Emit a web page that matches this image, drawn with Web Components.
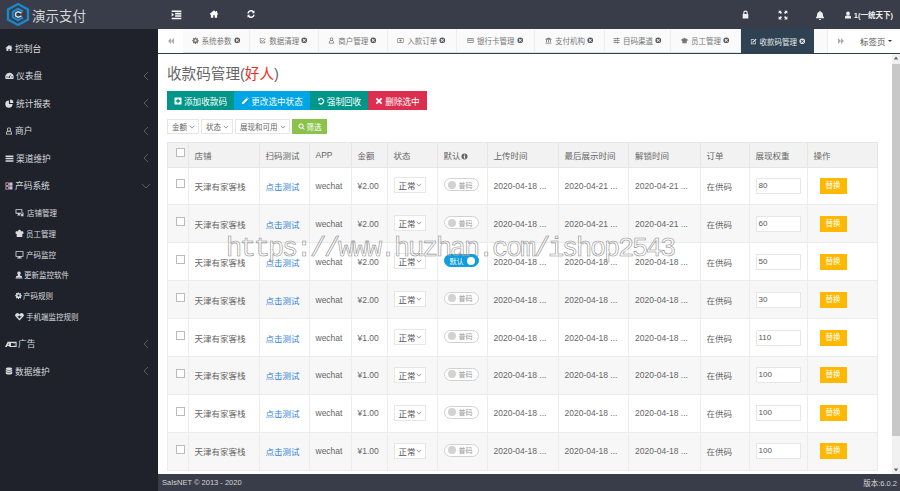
<!DOCTYPE html>
<html lang="zh">
<head>
<meta charset="utf-8">
<title>收款码管理</title>
<style>
  html, body { margin: 0; height: 100%; overflow: hidden; }
  body { font-family: "Liberation Sans", "Noto Sans CJK SC", sans-serif; color: #666; }
</style>
</head>
<body>
<pay-app>
  <top-bar slot="top"></top-bar>
  <side-menu slot="side"></side-menu>
  <tab-strip slot="tabs"></tab-strip>
  <code-page slot="main"></code-page>
  <page-footer slot="foot"></page-footer>
</pay-app>
<water-mark>https://www.huzhan.com/ishop2543</water-mark>

<script>
'use strict';

(function() {
  // 图标都画在 16x16 的格子里
  const ICONS = {
    indent: 'M1 2h14v2.4H1zM6 5.6h9V8H6zM6 9h9v2.400H6zM1 12.600h14V15H1zM1 5.500l3.500 2.700L1 11z',
    home: 'M8 2 1 8l1 1.200 1-.8V14h3.800v-4h2.400v4H13V8.400l1 .8L15 8l-2-1.700V3h-2v1.600z',
    refresh: 'M13.500 2.500v4.300H9.200l1.700-1.700A4 4 0 0 0 4.300 7H2a6.200 6.200 0 0 1 10.200-3.800zM2.500 13.500V9.200h4.300l-1.700 1.700A4 4 0 0 0 11.700 9H14a6.200 6.200 0 0 1-10.200 3.800z',
    lock: 'M4 7V5a4 4 0 0 1 8 0v2h1v8H3V7zm2 0h4V5a2 2 0 0 0-4 0z',
    expand: 'M1 1h5L4.500 2.500 6.500 4.500 4.500 6.500 2.500 4.500 1 6zM15 1v5l-1.500-1.500-2 2-2-2 2-2L10 1zM1 15v-5l1.500 1.500 2-2 2 2-2 2L6 15zM15 15h-5l1.500-1.500-2-2 2-2 2 2L15 10z',
    bell: 'M8 1a1 1 0 0 1 1 1v.6c2.500.5 3.700 2.500 3.700 5 0 2.400.8 3.400 1.800 4.400v1h-13v-1c1-1 1.800-2 1.800-4.400 0-2.500 1.200-4.500 3.700-5V2a1 1 0 0 1 1-1zM6.300 14.500h3.400a1.700 1.700 0 0 1-3.400 0z',
    user: 'M8 1a3.500 3.500 0 1 1 0 7.500A3.500 3.500 0 0 1 8 1zM2 15v-2.500C2 10.500 3.500 9 5 9h6c1.500 0 3 1.500 3 3.500V15z',
    userO: 'M8 1a4 4 0 0 1 2.700 7c1.900.6 3.300 2.300 3.300 4.300V15H2v-2.700C2 10.300 3.400 8.600 5.300 8A4 4 0 0 1 8 1zm0 1.600a2.400 2.400 0 1 0 0 4.800 2.400 2.400 0 0 0 0-4.800zM6.500 9.400c-1.700 0-3 1.200-3 2.900v1.100h9v-1.100c0-1.700-1.300-2.900-3-2.900z',
    gauge: 'M8 3a7.500 7.500 0 0 1 7.500 7.500c0 1.300-.3 2.400-.8 3.500H1.300A7.500 7.500 0 0 1 8 3zM3.500 9.500a1 1 0 1 0 0 2 1 1 0 0 0 0-2zm9 0a1 1 0 1 0 0 2 1 1 0 0 0 0-2zM10.800 5.500 7.400 9.800a1.300 1.300 0 1 0 1.400.6z',
    pie: 'M7 2.500V9h6.500A6.500 6.500 0 1 1 7 2.500zM9 1a6 6 0 0 1 6 6H9z',
    list: 'M1 2.500h14v2.700H1zM1 6.700h14v2.700H1zM1 10.900h14v2.700H1z',
    grid: 'M1 1h6.500v6.500H1zm1.500 1.500V6H6V2.500zM8.500 1H15v6.500H8.500zM1 8.500h6.500V15H1zm1.500 1.500v3.500H6V10zM8.500 8.500H15V15H8.500z',
    shop: 'M1 2h12v8H8.500v2H10v1.500H4V12h1.500v-2H1zm1.500 1.500v5h9v-5zM11 8h4v6.500h-4zm1.200 1.300v1.200h1.600V9.300z',
    team: 'M8 1.500a2.500 2.500 0 0 1 2.500 2.500h2a2 2 0 0 1 2.500 1.500v3l-2 .5v5H3V9L1 8.500v-3A2 2 0 0 1 3.500 4h2A2.500 2.500 0 0 1 8 1.500z',
    desktop: 'M1 2h14v10H9.500v1.500H12V15H4v-1.500h2.500V12H1zm1.500 1.500v7h11v-7z',
    upload: 'M8 1a3.500 3.500 0 0 1 2 6.400V9l4 1.500V13H2v-2.500L6 9V7.400A3.500 3.500 0 0 1 8 1zM1 13.500h14V15H1z',
    gear: 'M6.800 1h2.400l.3 1.900 1.300.6 1.600-1.100 1.700 1.700-1.100 1.600.6 1.300 1.900.3v2.400l-1.900.3-.6 1.300 1.100 1.600-1.700 1.700-1.600-1.100-1.300.6-.3 1.900H6.800l-.3-1.900-1.300-.6-1.600 1.100-1.700-1.700 1.100-1.600-.6-1.300L.5 9.200V6.800l1.900-.3.6-1.300-1.100-1.600 1.700-1.700 1.600 1.100 1.300-.6zM8 5.600a2.400 2.400 0 1 0 0 4.800 2.400 2.400 0 0 0 0-4.800z',
    heart: 'M8 15 1.500 8.500a4 4 0 0 1 0-5.500 4 4 0 0 1 5.500 0L8 4l1-1a4 4 0 0 1 5.500 0 4 4 0 0 1 0 5.500zM4 7.500l2.500.2L8 5.800l1.200 2 2.800-.2-4 3.900z',
    ad: 'M0 12 3.500 5h12v7H6l-.5-1.500H3L2.500 12zM3.600 9h1.500L4.700 7zM8 6.500v4h2.500a2 2 0 0 0 0-4zm4.500 0v4h1.500v-4z',
    database: 'M8 1c3.600 0 6.500 1 6.500 2.500S11.600 6 8 6 1.500 5 1.500 3.500 4.400 1 8 1zM1.500 5c1 1.300 3.500 2 6.500 2s5.500-.7 6.500-2v2.500C14.500 9 11.600 10 8 10S1.500 9 1.500 7.500zM1.500 9c1 1.300 3.500 2 6.500 2s5.500-.7 6.500-2v3.500C14.500 14 11.600 15 8 15s-6.500-1-6.500-2.500z',
    backward: 'M8 2v12L2 8zM14 2v12L8 8z',
    forward: 'M2 2v12l6-6zM8 2v12l6-6z',
    check: 'M2 2h10v1.500H3.500v9h9V9H14v5H2zM14.500 3l1 1L8 11.500 4.500 8l1-1L8 9.500z',
    card: 'M1 3h14v10H1zm1.300 1.300v2h11.400v-2zm0 4.200v3.200h11.400V8.500z',
    cash: 'M1 3h14v10H1zm1.300 1.300v7.400h11.400V4.300zM8 5.500a2.500 2.500 0 1 1 0 5 2.500 2.500 0 0 1 0-5z',
    bank: 'M8 1l7 3.500V6H1V4.500zM2.500 7h2v5h-2zM7 7h2v5H7zM11.500 7h2v5h-2zM1 13h14v2H1z',
    sliders: 'M1 3h8V1.500h2V3h4v1.500h-4V6H9V4.500H1zM1 7.500h3V6h2v1.500h9V9H6v1.500H4V9H1zM1 12h8v-1.500h2V12h4v1.500h-4V15H9v-1.500H1z',
    edit: 'M2 3h8L8.500 4.500h-5v8h8v-4L13 7v7H2zM13 1.500 15 3.500 8 10.500 5.500 11 6 8.500z',
    plusSquare: 'M2 1h12a1 1 0 0 1 1 1v12a1 1 0 0 1-1 1H2a1 1 0 0 1-1-1V2a1 1 0 0 1 1-1zm4.700 2.500v3.200H3.500v2.600h3.200v3.200h2.600V9.300h3.200V6.700H9.300V3.500z',
    pencil: 'M11 2 14 5 5.500 13.500 1.500 14.500 2.500 10.500zM12 1l1-.5 2.500 2.500L15 4z',
    undo: 'M2 2v5h5L5 5a4.200 4.200 0 1 1-.5 6l-1.700 1.400A6.400 6.400 0 1 0 3.700 3.600z',
    times: 'M4 1.500 8 5.500l4-4L14.500 4l-4 4 4 4-2.500 2.500-4-4-4 4L1.500 12l4-4-4-4z',
    search: 'M7 1a6 6 0 0 1 4.800 9.600L15.500 14 14 15.500l-3.400-3.700A6 6 0 1 1 7 1zm0 2.200a3.800 3.800 0 1 0 0 7.600 3.800 3.800 0 0 0 0-7.600z',
    close: 'M8 1a7 7 0 1 1 0 14A7 7 0 0 1 8 1zM5.500 4 4 5.500 6.500 8 4 10.500 5.500 12 8 9.500l2.500 2.500 1.500-1.500L9.500 8 12 5.500 10.500 4 8 6.500z',
    info: 'M8 1a7 7 0 1 1 0 14A7 7 0 0 1 8 1zM6.800 3.500v2.200h2.400V3.500zM6 7v1.300h.8v3H6v1.200h4v-1.200h-.8V7z'
  };

  class UiIcon extends HTMLElement {
    constructor() {
      super()
      const size = this.getAttribute('size') || 10
      const d = ICONS[this.getAttribute('name')] || ''
      this.attachShadow({ mode: 'open' }).innerHTML = `
        <style>
        :host { display: inline-flex; flex: none; }
        svg { display: block; width: ${size}px; height: ${size}px; fill: currentColor; }
        </style>
        <svg viewBox="0 0 16 16"><path fill-rule="evenodd" d="${d}"></path></svg>
      `
    }
  }
  customElements.define('ui-icon', UiIcon)

  class PayApp extends HTMLElement {
    constructor() {
      super()
      this.attachShadow({ mode: 'open' }).innerHTML = `
        <style>
        :host {
          display: grid;
          grid-template-columns: 158px 1fr;
          grid-template-rows: 29px 25px 1fr 17px;
          width: 900px;
          height: 491px;
          overflow: hidden;
          background: #fff;
        }
        ::slotted([slot=top]) { grid-column: 1 / 3; }
        ::slotted([slot=side]) { grid-row: 2 / 5; }
        </style>
        <slot name="top"></slot>
        <slot name="side"></slot>
        <slot name="tabs"></slot>
        <slot name="main"></slot>
        <slot name="foot"></slot>
      `
    }
  }
  customElements.define('pay-app', PayApp)

  class TopBar extends HTMLElement {
    constructor() {
      super()
      this.attachShadow({ mode: 'open' }).innerHTML = `
        <style>
        :host {
          display: flex;
          align-items: center;
          background: #393c49;
          color: #fff;
        }
        .logo { display: flex; align-items: center; gap: 2px; width: 158px; padding-left: 6px; box-sizing: border-box; }
        .logo span { font-size: 13.500px; color: #d6d6d6; }
        .left { display: flex; gap: 27px; padding-left: 13px; }
        .right { margin-left: auto; display: flex; align-items: center; padding-right: 7px; font-size: 7.500px; font-weight: bold; color: #eee; }
        .right ui-icon:nth-child(1) { margin-right: 28px; }
        .right ui-icon:nth-child(2) { margin-right: 27px; }
        .right ui-icon:nth-child(3) { margin-right: 19px; }
        .right ui-icon:nth-child(4) { margin-right: 2px; }
        </style>
        <div class="logo">
          <svg width="24" height="25" viewBox="0 0 24 25" fill="none">
            <path d="M12 2 22 7.500v10L12 23 2 17.500v-10z" stroke="#1d87c9" stroke-width="2.400"></path>
            <path d="M17 9.500 12 6.800 6.800 9.800v5.400l5.200 3 5-2.700" stroke="#1d87c9" stroke-width="2.200"></path>
            <path d="M15.500 11 12 9.700 9.600 11.200v2.600L12 15.300l3.500-1.300" stroke="#d8e6f0" stroke-width="1.400"></path>
          </svg>
          <span>演示支付</span>
        </div>
        <div class="left">
          <ui-icon name="indent" size="11"></ui-icon>
          <ui-icon name="home" size="10"></ui-icon>
          <ui-icon name="refresh" size="10"></ui-icon>
        </div>
        <div class="right">
          <ui-icon name="lock" size="9"></ui-icon>
          <ui-icon name="expand" size="10"></ui-icon>
          <ui-icon name="bell" size="10"></ui-icon>
          <ui-icon name="user" size="8"></ui-icon>
          <span>1(一统天下)</span>
        </div>
      `
    }
  }
  customElements.define('top-bar', TopBar)

  const MENU = [
    { icon: 'home', text: '控制台', size: 8 },
    { icon: 'gauge', text: '仪表盘', arrow: true },
    { icon: 'pie', text: '统计报表', arrow: true },
    { icon: 'userO', text: '商户', arrow: true, size: 8 },
    { icon: 'list', text: '渠道维护', arrow: true },
    { icon: 'grid', text: '产码系统', arrow: true, open: true, size: 8, tint: '#d9b8d0' },
    { sub: true, icon: 'shop', text: '店铺管理', gap: 3 },
    { sub: true, icon: 'team', text: '员工管理', gap: 2 },
    { sub: true, icon: 'desktop', text: '产码监控', gap: 2 },
    { sub: true, icon: 'upload', text: '更新监控软件', gap: 1, size: 8 },
    { sub: true, icon: 'gear', text: '产码规则', gap: 1, size: 7 },
    { sub: true, icon: 'heart', text: '手机端监控规则', gap: 2 },
    { icon: 'ad', text: '广告', arrow: true, size: 12, gap: 1 },
    { icon: 'database', text: '数据维护', arrow: true, size: 8 }
  ]

  class SideMenu extends HTMLElement {
    constructor() {
      super()
      const rows = MENU.map(item => `
        <div class="${item.sub ? 'sub' : 'item'}">
          <ui-icon name="${item.icon}" size="${item.size || 9}" style="color:${item.tint || 'inherit'}"></ui-icon>
          <span style="margin-left:${item.gap === undefined ? 2 : item.gap}px">${item.text}</span>
          ${item.arrow ? `<svg class="arrow" viewBox="0 0 10 10"><path d="${item.open ? 'M1 3l4 4 4-4' : 'M7 1 3 5l4 4'}"></path></svg>` : ''}
        </div>
      `).join('')
      this.attachShadow({ mode: 'open' }).innerHTML = `
        <style>
        :host {
          display: block;
          background: #1f222b;
          color: #d8dade;
          padding-top: 5.500px;
        }
        .item {
          display: flex;
          align-items: center;
          height: 27.500px;
          padding-left: 5px;
          font-size: 8.700px;
          position: relative;
        }
        .sub {
          display: flex;
          align-items: center;
          height: 20.700px;
          padding-left: 15px;
          font-size: 7.500px;
        }
        /* 展开的子菜单上下各留一点空 */
        .item + .sub { margin-top: 3px; }
        .sub + .item { margin-top: 3.500px; }
        .arrow {
          position: absolute;
          right: 7px;
          width: 10px;
          height: 10px;
          fill: none;
          stroke: #5a5d66;
          stroke-width: 1;
        }
        </style>
        ${rows}
      `
    }
  }
  customElements.define('side-menu', SideMenu)

  const TABS = [
    { icon: 'gear', text: '系统参数', width: 66.500 },
    { icon: 'check', text: '数据清理', width: 69 },
    { icon: 'userO', text: '商户管理', width: 69 },
    { icon: 'cash', text: '入款订单', width: 69 },
    { icon: 'card', text: '银行卡管理', width: 78 },
    { icon: 'bank', text: '支付机构', width: 70.500 },
    { icon: 'sliders', text: '目码渠道', width: 65.500 },
    { icon: 'team', text: '员工管理', width: 70.500 },
    { icon: 'edit', text: '收款码管理', width: 73, active: true }
  ]

  class TabStrip extends HTMLElement {
    constructor() {
      super()
      const tabs = TABS.map(tab => `
        <div class="tab${tab.active ? ' active' : ''}" style="width:${tab.width}px">
          <ui-icon name="${tab.icon}" size="7"></ui-icon>
          <span>${tab.text}</span>
          <ui-icon name="close" size="6.500"></ui-icon>
        </div>
      `).join('')
      this.attachShadow({ mode: 'open' }).innerHTML = `
        <style>
        :host {
          display: flex;
          align-items: stretch;
          box-sizing: border-box;
          height: 25px;
          background: #fafafa;
          border-bottom: 1px solid #2f4050;
          color: #777;
          font-size: 7.500px;
        }
        .nav { display: flex; align-items: center; justify-content: center; width: 25px; background: #fff; color: #aaa; flex: none; }
        .tab {
          display: flex;
          align-items: center;
          justify-content: center;
          gap: 3px;
          box-sizing: border-box;
          border-right: 1px solid #eeeeee;
          flex: none;
          border-bottom: 1px solid #dfdfdf;
        }
        .tab ui-icon:last-child { color: #555; margin-left: -1px; }
        .tab.active { background: #2e4254; color: #e8e8e8; border: 0; }
        .tab.active ui-icon:last-child { color: #e8e8e8; }
        .gap { width: 13px; background: #fafafa; flex: none; }
        .next { width: 26px; border-left: 1px solid #eee; }
        .menu { display: flex; align-items: center; gap: 2px; padding-left: 6px; background: #fff; flex: 1; color: #555; font-size: 8.500px; }
        .menu i { border: 2.500px solid transparent; border-top-color: #333; border-bottom: 0; }
        </style>
        <div class="nav"><ui-icon name="backward" size="8"></ui-icon></div>
        ${tabs}
        <div class="gap"></div>
        <div class="nav next"><ui-icon name="forward" size="8"></ui-icon></div>
        <div class="menu"><span>标签页</span><i></i></div>
      `
    }
  }
  customElements.define('tab-strip', TabStrip)

  class ActionBtn extends HTMLElement {
    constructor() {
      super()
      this.attachShadow({ mode: 'open' }).innerHTML = `
        <style>
        :host {
          display: inline-flex;
          align-items: center;
          justify-content: center;
          gap: 2px;
          height: 19px;
          color: #fff;
          font-size: 8.600px;
          background: var(--btn, #009688);
        }
        </style>
        <ui-icon name="${this.getAttribute('icon')}" size="8"></ui-icon>
        <slot></slot>
      `
    }
  }
  customElements.define('action-btn', ActionBtn)

  class FilterSelect extends HTMLElement {
    constructor() {
      super()
      this.attachShadow({ mode: 'open' }).innerHTML = `
        <style>
        :host {
          display: inline-flex;
          align-items: center;
          justify-content: space-between;
          box-sizing: border-box;
          height: 15px;
          padding: 0 3px 0 4px;
          border: 1px solid #e6e6e6;
          background: #fff;
          color: #666;
          font-size: 7.500px;
        }
        svg { width: 6px; height: 6px; fill: none; stroke: #777; stroke-width: 1; }
        </style>
        <slot></slot>
        <svg viewBox="0 0 8 8"><path d="M1 2.500l3 3 3-3"></path></svg>
      `
    }
  }
  customElements.define('filter-select', FilterSelect)

  class CodeSwitch extends HTMLElement {
    constructor() {
      super()
      const on = this.hasAttribute('on')
      this.attachShadow({ mode: 'open' }).innerHTML = `
        <style>
        :host {
          display: inline-flex;
          align-items: center;
          box-sizing: border-box;
          width: 35px;
          height: 13px;
          padding: 0 3px;
          gap: 3px;
          border-radius: 7px;
          border: 1px solid ${on ? '#0d9de0' : '#d2d2d2'};
          background: ${on ? '#0d9de0' : '#fff'};
          color: ${on ? '#fff' : '#999'};
          font-size: 7px;
          flex-direction: ${on ? 'row-reverse' : 'row'};
        }
        i { width: 8px; height: 8px; border-radius: 50%; background: ${on ? '#fff' : '#d2d2d2'}; flex: none; }
        </style>
        <i></i><span>${on ? '默认' : '普码'}</span>
      `
    }
  }
  customElements.define('code-switch', CodeSwitch)

  const COLS = [20.500, 71, 50, 42, 36, 50, 50, 71, 70.500, 71.500, 49, 58, 70.500]
  const HEADS = ['', '店铺', '扫码测试', 'APP', '金额', '状态', '默认', '上传时间', '最后展示时间', '解锁时间', '订单', '展现权重', '操作']
  const ROWS = [
    { money: '¥2.00', last: '2020-04-21', weight: 80 },
    { money: '¥2.00', last: '2020-04-21', weight: 60 },
    { money: '¥2.00', last: '2020-04-18', weight: 50, on: true },
    { money: '¥2.00', last: '2020-04-18', weight: 30 },
    { money: '¥1.00', last: '2020-04-18', weight: 110 },
    { money: '¥1.00', last: '2020-04-18', weight: 100 },
    { money: '¥1.00', last: '2020-04-18', weight: 100 },
    { money: '¥1.00', last: '2020-04-18', weight: 100 }
  ]

  class CodeTable extends HTMLElement {
    constructor() {
      super()
      const cols = COLS.map(w => `<col style="width:${w}px">`).join('')
      const heads = HEADS.map((h, i) => {
        if (i === 0) return '<th><span class="box"></span></th>'
        if (h === '默认') return `<th>${h}<ui-icon name="info" size="7"></ui-icon></th>`
        return `<th>${h}</th>`
      }).join('')
      const rows = ROWS.map(row => `
        <tr>
          <td><span class="box"></span></td>
          <td>天津有家客栈</td>
          <td><a>点击测试</a></td>
          <td>wechat</td>
          <td>${row.money}</td>
          <td><filter-select class="state">正常</filter-select></td>
          <td><code-switch ${row.on ? 'on' : ''}></code-switch></td>
          <td>2020-04-18 ...</td>
          <td>${row.last} ...</td>
          <td>${row.last} ...</td>
          <td>在供码</td>
          <td><span class="weight">${row.weight}</span></td>
          <td><span class="swap">替换</span></td>
        </tr>
      `).join('')
      this.attachShadow({ mode: 'open' }).innerHTML = `
        <style>
        :host { display: block; }
        table {
          border-collapse: collapse;
          table-layout: fixed;
          width: 711px;
          font-size: 8.500px;
          color: #666;
          border: 1px solid #e8e8e8;
        }
        th {
          height: 24.500px;
          box-sizing: border-box;
          padding: 0 0 0 6px;
          background: #f2f2f2;
          border: 1px solid #e6e6e6;
          font-weight: normal;
          text-align: left;
          white-space: nowrap;
          overflow: hidden;
        }
        th ui-icon { vertical-align: -1px; }
        td {
          height: 37.900px;
          box-sizing: border-box;
          padding: 0 0 0 6px;
          border: 1px solid #ececec;
          white-space: nowrap;
          overflow: hidden;
        }
        tr:nth-child(even) td { background: #f7f7f7; }
        th:first-child, td:first-child { padding-left: 8px; }
        .box {
          display: block;
          box-sizing: border-box;
          width: 9px;
          height: 9px;
          margin-top: -4px;
          border: 1px solid #bbb;
          background: #fff;
        }
        a { color: #2f7fdc; }
        .state { width: 32px; height: 16px; font-size: 8.500px; margin-top: -1px; vertical-align: middle; color: #555; }
        code-switch { vertical-align: middle; margin-top: -3px; }
        .weight {
          display: block;
          box-sizing: border-box;
          width: 45px;
          height: 16px;
          line-height: 14px;
          padding-left: 2px;
          border: 1px solid #e6e6e6;
          background: #fff;
          font-size: 8px;
          color: #555;
        }
        .swap {
          display: block;
          width: 27px;
          height: 16px;
          line-height: 15px;
          margin-left: 6px;
          background: #ffb800;
          color: #fff;
          text-align: center;
          font-size: 7.500px;
        }
        </style>
        <table>
          <colgroup>${cols}</colgroup>
          <thead><tr>${heads}</tr></thead>
          <tbody>${rows}</tbody>
        </table>
      `
    }
  }
  customElements.define('code-table', CodeTable)

  class CodePage extends HTMLElement {
    constructor() {
      super()
      this.attachShadow({ mode: 'open' }).innerHTML = `
        <style>
        :host { display: flex; min-height: 0; overflow: hidden; background: #fff; }
        .body { flex: 1; padding: 11px 0 0 9px; min-width: 0; overflow: hidden; }
        h1 { margin: 0; font-size: 14.600px; line-height: 18px; font-weight: normal; color: #666; }
        h1 em { font-style: normal; color: #f02c1f; }
        .actions { display: flex; margin-top: 8px; }
        .filters { display: flex; gap: 2px; margin-top: 9px; margin-bottom: 8px; }
        .go {
          display: inline-flex; align-items: center; justify-content: center; gap: 2px;
          width: 35px; height: 15px; background: #8bc34a; color: #fff; font-size: 7.500px;
        }
        .bar { width: 8px; flex: none; background: #f1f1f1; position: relative; display: flex; flex-direction: column; align-items: center; }
        .bar i { display: block; width: 8px; height: 372px; background: #c8c8c8; margin-top: 10px; }
        .bar svg { width: 6px; height: 6px; fill: #666; position: absolute; left: 1px; }
        </style>
        <div class="body">
          <h1>收款码管理(<em>好人</em>)</h1>
          <div class="actions">
            <action-btn icon="plusSquare" style="width:67px;--btn:#009688">添加收款码</action-btn>
            <action-btn icon="pencil" style="width:76px;--btn:#00a5e6">更改选中状态</action-btn>
            <action-btn icon="undo" style="width:58px;--btn:#009688">强制回收</action-btn>
            <action-btn icon="times" style="width:59px;--btn:#dc2f4f">删除选中</action-btn>
          </div>
          <div class="filters">
            <filter-select style="width:32px">金额</filter-select>
            <filter-select style="width:32px">状态</filter-select>
            <filter-select style="width:55px">展现和可用</filter-select>
            <span class="go"><ui-icon name="search" size="7"></ui-icon>筛选</span>
          </div>
          <code-table></code-table>
        </div>
        <div class="bar">
          <svg viewBox="0 0 8 8" style="top:1px"><path d="M4 2 7 6H1z"></path></svg>
          <i></i>
          <svg viewBox="0 0 8 8" style="bottom:1px"><path d="M4 6 1 2h6z"></path></svg>
        </div>
      `
    }
  }
  customElements.define('code-page', CodePage)

  class PageFooter extends HTMLElement {
    constructor() {
      super()
      this.attachShadow({ mode: 'open' }).innerHTML = `
        <style>
        :host {
          display: flex;
          align-items: center;
          justify-content: space-between;
          padding: 0 3px 0 4px;
          background: #393c49;
          color: #d6d6d6;
          font-size: 7.500px;
        }
        </style>
        <span>SaIsNET © 2013 - 2020</span>
        <span>版本:6.0.2</span>
      `
    }
  }
  customElements.define('page-footer', PageFooter)

  // 水印盖在整页上面，只有描边
  class WaterMark extends HTMLElement {
    constructor() {
      super()
      this.attachShadow({ mode: 'open' }).innerHTML = `
        <style>
        :host {
          position: absolute;
          left: 226px;
          top: 234px;
          font: 27px/30px "Liberation Mono", monospace;
          letter-spacing: -2.200px;
          color: rgba(255, 255, 255, .25);
          -webkit-text-stroke: .6px #8f8f8f;
          white-space: nowrap;
          pointer-events: none;
        }
        </style>
        <slot></slot>
      `
    }
  }
  customElements.define('water-mark', WaterMark)
})();
</script>
</body>
</html>
